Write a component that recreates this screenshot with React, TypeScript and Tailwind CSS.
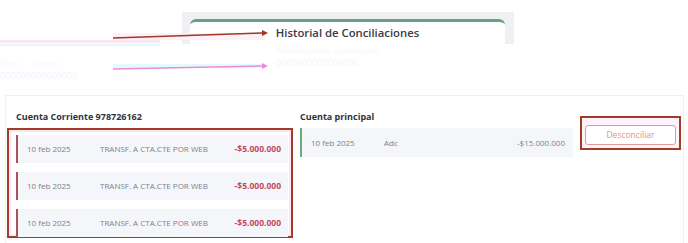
const movimientos = [
	{ fecha: '10 feb 2025', glosa: 'TRANSF. A CTA.CTE POR WEB', monto: '-$5.000.000' },
	{ fecha: '10 feb 2025', glosa: 'TRANSF. A CTA.CTE POR WEB', monto: '-$5.000.000' },
	{ fecha: '10 feb 2025', glosa: 'TRANSF. A CTA.CTE POR WEB', monto: '-$5.000.000' },
]

function Flecha({ y1, y2, color }: { y1: number; y2: number; color: string }) {
	return (
		<svg
			className="absolute left-0 top-0"
			width="688"
			height="95"
			viewBox="0 0 688 95"
			aria-hidden="true"
		>
			<line x1="113" y1={y1} x2="262" y2={y2} stroke={color} strokeWidth="1.6" />
			<path d={`M262 ${y2 - 3} L268 ${y2} L262 ${y2 + 3} Z`} fill={color} />
		</svg>
	)
}

export default function App() {
	return (
		<div className="relative h-[243px] w-[688px] overflow-hidden bg-white font-['Open_Sans',sans-serif]">
			{/* cabecera con pestaña */}
			<div className="relative h-[95px]">
				<div className="pl-[182px] pt-[12px]">
					<div className="h-[32px] w-[332px] bg-[#eef0f4] pl-[8px] pr-[9px] pt-[7px]">
						<div className="flex h-full items-center justify-center rounded-t-[6px] border-t-[3px] border-[#6b9f86] bg-white">
							<span className="text-[11.3px] font-semibold text-[#3b3b48]">
								Historial de Conciliaciones
							</span>
						</div>
					</div>
					<div className="ml-[94px] mt-[1px] text-[9px] leading-[12px] text-[#f6f8fd]">
						Movimientos conciliados
					</div>
					<div className="ml-[94px] text-[9px] leading-[12px] text-[#f1f5fd]">
						0000000000000000
					</div>
				</div>
				{/* anotaciones */}
				<div className="absolute left-0 top-[40px] h-[3px] w-[160px] bg-[#fde6f4]" />
				<div className="absolute left-0 top-[44px] h-[2px] w-[160px] bg-[#e3fbf8]" />
				<div className="absolute left-[113px] top-[33px] h-[7px] w-[152px] bg-[#fff0f8]" />
				<div className="absolute left-[113px] top-[64px] h-[4px] w-[152px] bg-[#e4fbfb]" />
				<div className="absolute left-0 top-[58px] text-[9px] leading-[12px] text-[#f6f8fd]">
					Mov. &nbsp;&nbsp;&nbsp;&nbsp;banco
				</div>
				<div className="absolute left-0 top-[70px] text-[9px] leading-[12px] text-[#f1f5fd]">
					000000000000000
				</div>
				<Flecha y1={38} y2={33} color="#9a3a22" />
				<Flecha y1={69} y2={66} color="#f08ad8" />
			</div>

			{/* tarjeta principal */}
			<div className="ml-[5px] flex h-[148px] w-[679px] gap-[7px] border-x border-t border-[#eef0f3] pl-[1px]">
				<div className="flex w-[286px] flex-col">
					<h2 className="pl-[9px] pt-[14px] text-[9px] font-bold leading-[13px] text-[#33333d]">
						Cuenta Corriente 978726162
					</h2>
					<div className="mt-[5px] flex h-[110px] flex-col gap-[9px] border-2 border-[#a23b27] pl-[7px] pr-[3px] pt-[5px] shadow-[inset_0_0_0_2px_#fde7f4]">
						{movimientos.map((m, i) => (
							<div
								key={i}
								className="flex h-[28px] shrink-0 items-center border-l-2 border-[#a9525e] bg-[#f5f6fa] pl-[9px] pr-[7px] text-[8px] text-[#7d808a]"
							>
								<span className="w-[73px]">{m.fecha}</span>
								<span className="flex-1">{m.glosa}</span>
								<span className="text-[8.5px] font-bold text-[#c4485f]">{m.monto}</span>
							</div>
						))}
					</div>
				</div>

				<div className="flex w-[273px] flex-col">
					<h2 className="pt-[14px] text-[9px] font-bold leading-[13px] text-[#33333d]">
						Cuenta principal
					</h2>
					<div className="mt-[5px] flex h-[29px] items-center border-l-2 border-[#6aaa85] bg-[#f5f6fa] pl-[9px] pr-[8px] text-[8px] text-[#7d808a]">
						<span className="w-[73px]">10 feb 2025</span>
						<span className="flex-1">Adc</span>
						<span>-$15.000.000</span>
					</div>
				</div>

				<div className="pt-[20px]">
					<div className="h-[34px] w-[101px] border-2 border-[#a23b27] bg-[#fff2fa] px-[3px] pt-[7px]">
						<button className="flex h-[20px] w-full items-center justify-center rounded-[3px] border border-[#e49a9a] bg-white text-[8.5px] text-[#e3938c]">
							Desconciliar
						</button>
					</div>
				</div>
			</div>
		</div>
	)
}
